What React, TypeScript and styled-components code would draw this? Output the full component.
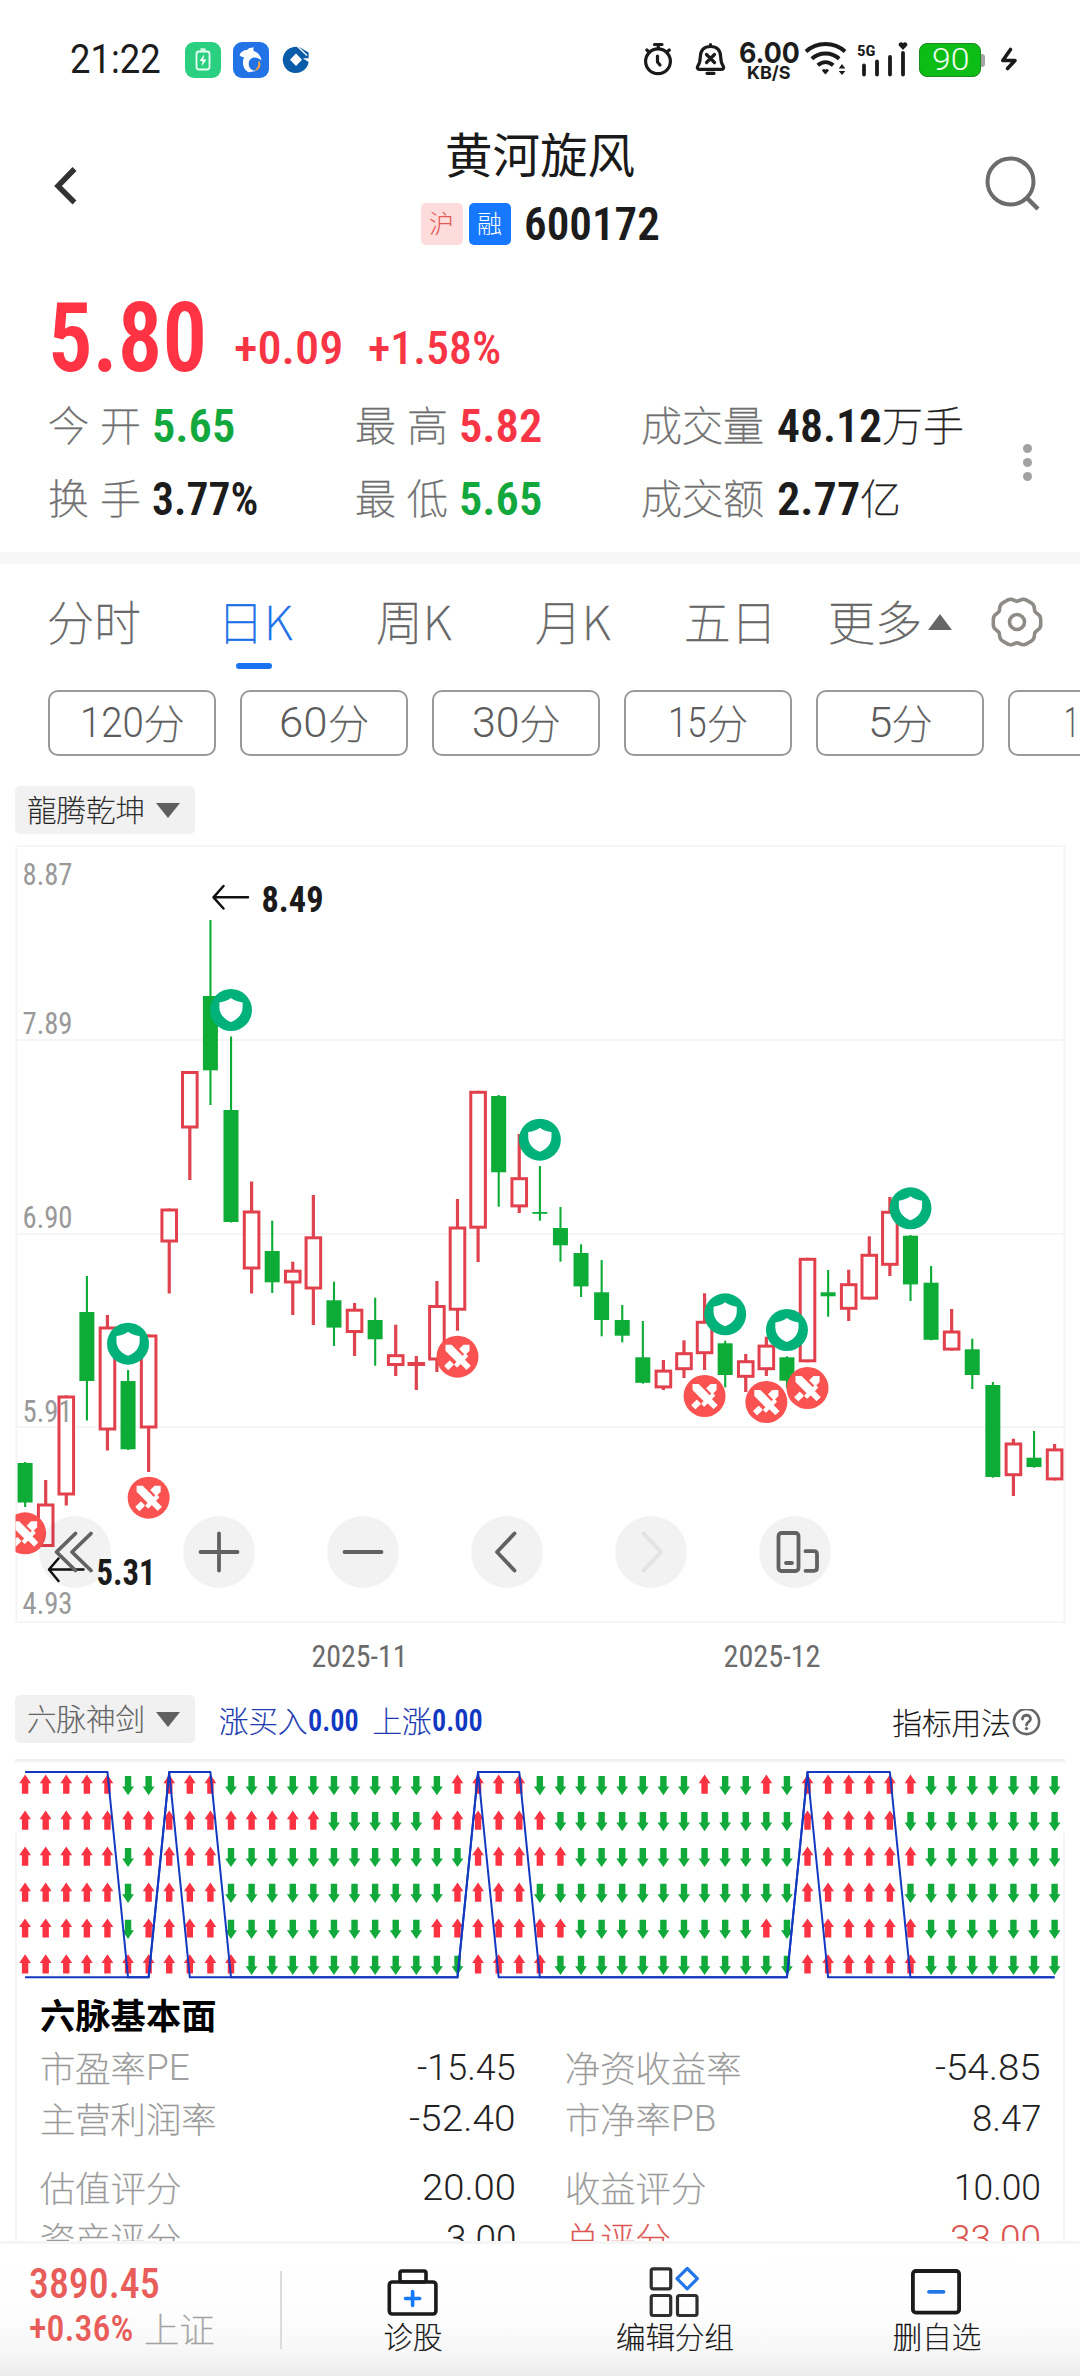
import React, { useLayoutEffect, useRef, useState } from "react";
import styled, { createGlobalStyle } from "styled-components";

const CJK = `"Noto Sans CJK SC", sans-serif`;
const DIN = `"Roboto Condensed", Roboto, sans-serif`;
const SANS = `Roboto, sans-serif`;
const RED = "#f73545";
const GREEN = "#12a83d";

const GlobalStyle = createGlobalStyle`
  * { box-sizing: border-box; }
  body { margin: 0; background: #fff; }
`;

/* ---------- text primitives ---------- */

const FitBox = styled.span<{ $w: number }>`
  display: block;
  flex: none;
  width: ${(p) => p.$w}px;
`;
const FitInner = styled.span<{ $size: number; $weight: number; $color: string; $font: string }>`
  display: inline-block;
  white-space: pre;
  transform-origin: 0 50%;
  font-family: ${(p) => p.$font};
  font-size: ${(p) => p.$size}px;
  font-weight: ${(p) => p.$weight};
  line-height: 1.1;
  vertical-align: top;
  color: ${(p) => p.$color};
`;

type NumProps = { w: number; size: number; weight?: number; color?: string; font?: string; children: string };

/** Figures condensed horizontally to the width of their slot. */
function Num({ w, size, weight = 500, color = "#1c1c1c", font = DIN, children }: NumProps) {
  const ref = useRef<HTMLSpanElement>(null);
  const [scale, setScale] = useState(1);
  useLayoutEffect(() => {
    if (ref.current) setScale(w / ref.current.offsetWidth);
  }, [w, children]);
  return (
    <FitBox $w={w}>
      <FitInner ref={ref} $size={size} $weight={weight} $color={color} $font={font} style={{ transform: `scaleX(${scale})` }}>
        {children}
      </FitInner>
    </FitBox>
  );
}

const Han = styled.span<{ $size: number; $color?: string; $weight?: number; $stroke?: number; $gap?: number }>`
  display: block;
  flex: none;
  white-space: pre;
  font-family: ${CJK};
  font-size: ${(p) => p.$size}px;
  line-height: 1.1;
  padding-bottom: 0.09em;
  font-weight: ${(p) => p.$weight ?? 100};
  color: ${(p) => p.$color ?? "#666"};
  letter-spacing: ${(p) => p.$gap ?? 0}px;
  -webkit-text-stroke: ${(p) => p.$stroke ?? 0.6}px ${(p) => p.$color ?? "#666"};
`;

/* ---------- page ---------- */

const Page = styled.main`
  width: 1080px;
  height: 2376px;
  overflow: hidden;
  background: #fff;
  display: flex;
  flex-direction: column;
`;

const StatusBar = styled.div`
  height: 120px;
  flex: none;
  display: flex;
  align-items: center;
  justify-content: space-between;
  padding: 0 59px 0 70px;
`;
const StatusGroup = styled.div`
  display: flex;
  align-items: center;
`;
const AppIcons = styled.div`
  display: flex;
  gap: 12px;
  margin-left: 24px;
  align-items: center;
`;
const Speed = styled.div`
  display: flex;
  flex-direction: column;
  align-items: center;
  width: 62px;
  margin-left: 7px;
  margin-right: 2px;
  & > * + * { margin-top: -6px; }
`;
const Battery = styled.div`
  width: 62px;
  height: 34px;
  margin-left: 9px;
  border-radius: 8px;
  background: #0bbd14;
  border: 1px solid #19891d;
  display: flex;
  align-items: center;
  justify-content: center;
`;
const BatteryTip = styled.div`
  width: 4px;
  height: 13px;
  background: #a5a5a5;
  border-radius: 0 3px 3px 0;
`;

const Header = styled.header`
  height: 150px;
  flex: none;
  display: grid;
  grid-template-columns: 120px 1fr 120px;
`;
const BackIcon = styled.svg`
  margin: 46px 0 0 50px;
`;
const SearchIcon = styled.svg`
  margin: 34px 0 0 21px;
`;
const TitleBlock = styled.div`
  display: flex;
  flex-direction: column;
  align-items: center;
`;
const TitleLine = styled.div`
  height: 70px;
  display: flex;
  align-items: center;
`;
const CodeLine = styled.div`
  height: 42px;
  margin-top: 13px;
  display: flex;
  align-items: center;
`;
const Badge = styled.div<{ $bg: string }>`
  width: 42px;
  height: 42px;
  border-radius: 5px;
  margin-right: 6px;
  background: ${(p) => p.$bg};
  display: flex;
  align-items: center;
  justify-content: center;
`;
const CodeText = styled.div`
  margin-left: 7px;
`;

const Quote = styled.section`
  height: 282px;
  flex: none;
  padding: 28px 0 0 48px;
`;
const PriceLine = styled.div`
  display: flex;
  height: 80px;
  align-items: center;
`;
const Change = styled.div`
  display: flex;
  gap: 25px;
  margin: 20px 0 0 27px;
`;
const QuoteBody = styled.div`
  display: flex;
  align-items: center;
  margin-top: 11px;
`;
const Stats = styled.div`
  display: grid;
  grid-template-columns: 307px 286px 382px;
  grid-auto-rows: 73px;
`;
const Stat = styled.div`
  display: flex;
  align-items: center;
`;
const StatValue = styled.div<{ $x: number }>`
  margin-left: ${(p) => p.$x}px;
  display: flex;
  align-items: center;
`;
const MoreDots = styled.div`
  display: flex;
  flex-direction: column;
  gap: 5px;
  & > i { width: 9px; height: 9px; border-radius: 50%; background: #a2a2a2; }
`;
const Divider = styled.div`
  height: 12px;
  flex: none;
  background: #f7f7f7;
`;

const Tabs = styled.nav`
  height: 126px;
  flex: none;
  padding: 0 0 10px 47px;
  display: grid;
  grid-template-columns: 170px 159px 159px 149px 144px 163px 1fr;
  align-items: center;
`;
const Tab = styled.div<{ $active?: boolean }>`
  position: relative;
  display: flex;
  align-items: center;
  &::after {
    content: "";
    display: ${(p) => (p.$active ? "block" : "none")};
    position: absolute;
    left: 19px;
    bottom: -19px;
    width: 36px;
    height: 6px;
    border-radius: 3px;
    background: #1a74f2;
  }
`;
const Triangle = styled.i<{ $up?: boolean }>`
  flex: none;
  margin-left: ${(p) => (p.$up ? 6 : 0)}px;
  border: solid transparent;
  border-width: ${(p) => (p.$up ? "0 12px 16px" : "15px 12.5px 0")};
  border-color: ${(p) => (p.$up ? "transparent transparent #666" : "#5f5f5f transparent transparent")};
`;

const MinuteRow = styled.div`
  height: 66px;
  flex: none;
  display: flex;
  gap: 24px;
  padding-left: 48px;
  overflow: hidden;
`;
const MinuteChip = styled.button`
  all: unset;
  box-sizing: border-box;
  flex: none;
  width: 168px;
  height: 66px;
  border: 2px solid #999;
  border-radius: 10px;
  display: flex;
  align-items: center;
  justify-content: center;
`;

const SelectChip = styled.div`
  flex: none;
  width: 180px;
  height: 48px;
  border-radius: 5px;
  background: #f1f1f1;
  display: flex;
  align-items: center;
  justify-content: space-between;
  padding: 0 15px 0 12px;
`;
const MainSelect = styled.div`
  margin: 30px 0 0 15px;
  flex: none;
`;

const ChartArea = styled.section`
  position: relative;
  height: 850px;
  margin-top: 6px;
  flex: none;
`;
const ChartSvg = styled.svg`
  display: block;
`;
const Controls = styled.div`
  position: absolute;
  left: 39px;
  top: 676px;
  display: flex;
  gap: 72px;
`;
const RoundButton = styled.div<{ $off?: boolean }>`
  width: 72px;
  height: 72px;
  border-radius: 50%;
  background: rgba(0, 0, 0, 0.052);
  color: ${(p) => (p.$off ? "#e3e3e3" : "#626262")};
`;

const IndicatorBar = styled.div`
  height: 48px;
  margin: 5px 39px 0 15px;
  flex: none;
  display: flex;
  align-items: center;
`;
const Reading = styled.div<{ $x: number }>`
  display: flex;
  align-items: center;
  margin: 4px 0 0 ${(p) => p.$x}px;
`;
const Usage = styled.div`
  margin: 10px 0 0 auto;
  display: flex;
  align-items: center;
`;

const Fundamentals = styled.section`
  height: 246px;
  flex: none;
  margin: 0 15px;
  padding: 0 23px;
  border: solid #f5f5f5;
  border-width: 0 2px;
  overflow: hidden;
`;
const FundTitle = styled.div`
  height: 42px;
  margin-bottom: 6px;
  display: flex;
  align-items: center;
`;
const FundRow = styled.div<{ $gap?: boolean }>`
  height: 51px;
  margin-top: ${(p) => (p.$gap ? 18 : 0)}px;
  display: grid;
  grid-template-columns: 476px 476px;
  column-gap: 49px;
`;
const FundCell = styled.div`
  display: flex;
  align-items: center;
  justify-content: space-between;
`;
const LabelGroup = styled.div`
  display: flex;
  align-items: center;
`;

const BottomBar = styled.footer`
  height: 135px;
  flex: none;
  border-top: 3px solid #f5f5f5;
  background: linear-gradient(#fff 0%, #fdfdfd 55%, #f6f6f6 85%, #ececec 100%);
  display: grid;
  grid-template-columns: 280px 2px 262px 262px 262px;
`;
const IndexBlock = styled.div`
  padding: 18px 0 0 29px;
`;
const IndexLine = styled.div`
  height: 45px;
  display: flex;
  align-items: center;
`;
const IndexName = styled.div`
  margin-left: 11px;
`;
const BarDivider = styled.div`
  height: 78px;
  margin-top: 27px;
  background: #dcdcdc;
`;
const Action = styled.div`
  padding-top: 20px;
  display: flex;
  flex-direction: column;
  align-items: center;
`;
const ActionLabel = styled.div`
  height: 34px;
  display: flex;
  align-items: center;
`;

/* ---------- candle data: [up?, bodyTop, bodyBottom, high, low] ---------- */

type Candle = [0 | 1, number, number, number, number];
const candles: Candle[] = [
  [0, 1463, 1502.5, 1462, 1507], [1, 1503.5, 1547, 1480, 1547], [1, 1395.5, 1495.5, 1395.5, 1505.5],
  [0, 1312, 1381, 1276, 1420.5], [1, 1326.5, 1430.5, 1315, 1450.5], [0, 1381, 1449.3, 1370, 1450],
  [1, 1334.5, 1428.5, 1334.5, 1472], [1, 1208.5, 1242.5, 1208.5, 1293.5], [1, 1071, 1128.5, 1071, 1180],
  [0, 996, 1070.3, 920, 1105], [0, 1110, 1222, 1036.5, 1222.5], [1, 1210.5, 1269.5, 1181.5, 1293.5],
  [0, 1251, 1282.3, 1220.7, 1293], [1, 1269.7, 1283.5, 1261.7, 1315], [1, 1236.3, 1289.5, 1195, 1325],
  [0, 1300.3, 1327.6, 1281.7, 1346], [1, 1308.7, 1333, 1303, 1356], [0, 1320, 1339.3, 1297.7, 1365.7],
  [1, 1354.2, 1366, 1324.7, 1376], [1, 1362, 1366, 1356, 1390], [1, 1305, 1360.5, 1281, 1372],
  [1, 1226.5, 1310.7, 1199, 1330.7], [1, 1090.8, 1228.7, 1090.8, 1262], [0, 1096, 1172.3, 1095, 1206.7],
  [1, 1177.2, 1207.4, 1134, 1213], [0, 1212, 1213.8, 1166, 1220.7], [0, 1228, 1245.3, 1207, 1261.7],
  [0, 1253, 1286.4, 1244.3, 1297], [0, 1292.3, 1320, 1260, 1336.3], [0, 1320, 1335.7, 1305, 1342.3],
  [0, 1357.3, 1382.8, 1321, 1383.7], [1, 1369.6, 1388.4, 1360, 1390], [1, 1352.2, 1370.2, 1340.3, 1378],
  [1, 1320.8, 1354.2, 1293.3, 1370], [0, 1343.3, 1375, 1340.7, 1387.3], [1, 1360.2, 1377.8, 1354, 1392],
  [1, 1344.6, 1370.2, 1336.7, 1376], [0, 1357.3, 1380.7, 1356.3, 1388], [1, 1257.8, 1362.3, 1257.8, 1362.3],
  [0, 1292.3, 1296.3, 1270, 1316.7], [1, 1283.2, 1309.8, 1269.7, 1321], [1, 1253.8, 1299.6, 1236.3, 1299.6],
  [1, 1210.8, 1265.8, 1197, 1276], [0, 1235.7, 1284.4, 1235, 1301], [0, 1282.7, 1339.8, 1266, 1340.3],
  [1, 1330.5, 1350.6, 1309, 1350.6], [0, 1349.3, 1375, 1338.7, 1389], [0, 1385, 1477, 1382, 1477.7],
  [1, 1442.5, 1476.2, 1438.7, 1496], [0, 1457.7, 1467, 1431, 1467.7], [1, 1448.4, 1480.4, 1444, 1480.4],
];
const cx = (i: number) => 25.1 + 20.59 * i;

function CandleMark({ c, i }: { c: Candle; i: number }) {
  const [up, top, bottom, high, low] = c;
  const x = cx(i);
  if (!up)
    return (
      <g fill="#0cac37">
        <rect x={x - 1} y={high} width={2.1} height={low - high} />
        <rect x={x - 7.5} y={top} width={15} height={bottom - top} />
      </g>
    );
  return (
    <g>
      <rect x={x - 1.6} y={high} width={3.2} height={low - high} fill="#de4450" />
      <rect x={x - 7.3} y={top + 1.5} width={14.6} height={Math.max(1, bottom - top - 3)} fill={bottom - top < 5 ? RED : "#fff"} stroke="#e2404d" strokeWidth={3} />
    </g>
  );
}

const shields: [number, number][] = [[5, 1343.7], [10, 1010], [25, 1139.7], [34, 1314.3], [37, 1330], [43, 1208.3]];
const swords: [number, number][] = [[0, 1533.3], [6, 1497.7], [21, 1356.7], [33, 1396], [36, 1402], [38, 1388]];

const Shield = ({ x, y }: { x: number; y: number }) => (
  <g transform={`translate(${x} ${y})`}>
    <circle r={21} fill="#00b27a" />
    <path d="M0 -12C2.5 -10 7 -8 11.6 -7.6V-2.5C11.6 4.5 6.5 9.5 0 12C-6.5 9.5 -11.6 4.5 -11.6 -2.5V-7.6C-7 -8 -2.5 -10 0 -12Z" fill="#fff" />
  </g>
);
const Swords = ({ x, y }: { x: number; y: number }) => (
  <g transform={`translate(${x} ${y})`}>
    <circle r={21} fill="#fa5250" />
    <g fill="#fff">
      <g transform="rotate(135)">
        <path d="M-17 0L-12.7 -4.3H-6.5V4.3H-12.7Z" />
        <rect x={8} y={-3} width={8} height={6} rx={0.6} />
      </g>
      <g transform="rotate(45)">
        <path d="M-17 0L-12.7 -4.3H3.5V4.3H-12.7Z" />
        <rect x={3} y={-8} width={4.4} height={16} rx={1} />
        <rect x={6} y={-3} width={9.8} height={6} rx={0.6} />
      </g>
    </g>
  </g>
);

const axis: [string, number][] = [["8.87", 874], ["7.89", 1023], ["6.90", 1217], ["5.91", 1411], ["4.93", 1603]];

const SvgNum = styled.text<{ $size: number; $weight: number }>`
  font-family: ${DIN};
  font-size: ${(p) => p.$size}px;
  font-weight: ${(p) => p.$weight};
`;

function MainChart() {
  return (
    <ChartSvg width={1080} height={850} viewBox="0 840 1080 850">
      <defs>
        <clipPath id="plot"><rect x={15.5} y={840} width={1050} height={790} /></clipPath>
      </defs>
      <g stroke="#f5f5f5" strokeWidth={2} fill="none">
        <rect x={16.5} y={846} width={1048} height={776} />
        {[1040, 1234, 1427].map((y) => <line key={y} x1={16} x2={1064} y1={y} y2={y} />)}
      </g>
      <g clipPath="url(#plot)">
        {candles.map((c, i) => <CandleMark key={i} c={c} i={i} />)}
        {axis.map(([t, y]) => (
          <SvgNum key={t} x={22.5} y={y + 10.8} $size={31} $weight={450} fill="#999" textLength={50} lengthAdjust="spacingAndGlyphs">{t}</SvgNum>
        ))}
        {shields.map(([i, y]) => <Shield key={i} x={cx(i)} y={y} />)}
        {swords.map(([i, y]) => <Swords key={i} x={cx(i)} y={y} />)}
      </g>
      <g stroke="#111" strokeWidth={2.5} fill="none" strokeLinecap="round" strokeLinejoin="round">
        <path d="M248 897.3H213.5M223.5 886L213.5 897.3L223.5 908.5" />
        <path d="M83.5 1569.5H49M58.5 1558.5L49 1569.5L58.5 1581" />
      </g>
      <SvgNum x={261.5} y={911.5} $size={37.5} $weight={700} fill="#1b1b1b" textLength={62} lengthAdjust="spacingAndGlyphs">8.49</SvgNum>
      <SvgNum x={96.5} y={1584.8} $size={37.5} $weight={700} fill="#1b1b1b" textLength={59} lengthAdjust="spacingAndGlyphs">5.31</SvgNum>
      <SvgNum x={311.5} y={1667} $size={31} $weight={450} fill="#6b6b6b" textLength={96} lengthAdjust="spacingAndGlyphs">2025-11</SvgNum>
      <SvgNum x={723.5} y={1667} $size={31} $weight={450} fill="#6b6b6b" textLength={97} lengthAdjust="spacingAndGlyphs">2025-12</SvgNum>
    </ChartSvg>
  );
}

const glyphs: { d: string; off?: boolean }[] = [
  { d: "M36.5 17.5L17.5 36L36.5 54.5M52 17.5L33 36L52 54.5" },
  { d: "M17.5 36H54.5M36 17.5V54.5" },
  { d: "M17.5 36H54.5" },
  { d: "M43.5 17.5L26 36L43.5 54.5" },
  { d: "M28.5 17.5L46 36L28.5 54.5", off: true },
];

/* ---------- six-row signal grid ---------- */

const signalRows = [
  "UUUUUDDUUUDDDDDDDDDDDUUUUDDDDDDDDUDDUDUUUUUUDDDDDDD",
  "UUUUUUUUUUUUUUUDDDDDUUUUUUDDDDDDDDDDDDUUUUUDDDDDDDD",
  "UUUUUDUUUUDDDDDDDDDDDDUUUUUDDDDDDDDDDDUUUUUUDDDDDDD",
  "UUUUUDUUUUDDDDDDDDDDDUUUUDDDDDDDDDDDDDUUUUUDDDDDDDD",
  "UUUUUDUUUUDDDDDDDDDDUUUUUUUDDDDDDDDDUDUUUUUUDDDDDDD",
  "UUUUUUUUUUUDDDDDDDDDDDUUUUDDDDDDDDDDDDUUUUUUDDDDDDD",
];
const HI = 1772;
const LO = 1977.3;
const line = (isHigh: (i: number) => boolean) =>
  Array.from({ length: 51 }, (_, i) => `${cx(i)},${isHigh(i) ? HI : LO}`).join(" ");
const risingLine = line((i) => i <= 4 || (i >= 7 && i <= 9) || (i >= 22 && i <= 24) || (i >= 38 && i <= 42));
const buyLine = line((i) => i === 7 || i === 22 || i === 38);
const buyStart = buyLine.split(" ").slice(5).join(" ");

function SignalChart() {
  return (
    <ChartSvg width={1080} height={252} viewBox="0 1743 1080 252">
      <rect x={15} y={1759} width={1050} height={3} fill="#f1f1f1" />
      <path d="M16 1833V1995M1064 1833V1995" stroke="#f5f5f5" strokeWidth={2} />
      {signalRows.map((row, r) =>
        [...row].map((s, i) => {
          const y = 1784.3 + r * 35.95;
          return s === "U" ? (
            <path key={`${r}-${i}`} fill="#fa3242" transform={`translate(${cx(i)} ${y})`} d="M0 -9.7L5.9 -1H3.2V9.5H-3.2V-1H-5.9Z" />
          ) : (
            <path key={`${r}-${i}`} fill="#10a93a" transform={`translate(${cx(i)} ${y + 1.2})`} d="M0 9.7L5.9 1H3.2V-9.5H-3.2V1H-5.9Z" />
          );
        })
      )}
      <g fill="none" stroke="#1239c0" strokeWidth={2} strokeLinejoin="round">
        <path d={`M${cx(0)} ${LO}H${cx(5)}`} />
        <polyline points={buyStart} />
        <polyline points={risingLine} />
      </g>
    </ChartSvg>
  );
}

/* ---------- gear outline: broad teeth with six narrow notches ---------- */
const gearPath =
  "M" +
  Array.from({ length: 120 }, (_, k) => {
    const t = (k * 3 * Math.PI) / 180;
    const notch = Math.pow((1 - Math.cos(6 * t)) / 2, 2.2);
    const flat = 0.7 * Math.cos(6 * t);
    const r = 24.4 - flat - 4.2 * notch;
    return `${(26 + r * Math.cos(t)).toFixed(2)} ${(26 + r * Math.sin(t)).toFixed(2)}`;
  }).join("L") +
  "Z";

const stats: { label: string; gap: number; x: number; value: string; w: number; color?: string; unit?: string }[] = [
  { label: "今开", gap: 11, x: 0, value: "5.65", w: 83, color: GREEN },
  { label: "最高", gap: 11, x: 0, value: "5.82", w: 83, color: RED },
  { label: "成交量", gap: 0, x: 13, value: "48.12", w: 105, unit: "万手" },
  { label: "换手", gap: 11, x: 0, value: "3.77%", w: 106 },
  { label: "最低", gap: 11, x: 0, value: "5.65", w: 83, color: GREEN },
  { label: "成交额", gap: 0, x: 13, value: "2.77", w: 83, unit: "亿" },
];

const minutes: [string, number][] = [["120", 64], ["60", 49], ["30", 48], ["15", 39], ["5", 24], ["1", 15]];

type Fund = { label: string; latin?: string; lw?: number; value: string; w: number; color?: string };
const fundRows: [Fund, Fund][] = [
  [{ label: "市盈率", latin: "PE", lw: 44, value: "-15.45", w: 99 }, { label: "净资收益率", value: "-54.85", w: 106 }],
  [{ label: "主营利润率", value: "-52.40", w: 107 }, { label: "市净率", latin: "PB", lw: 45, value: "8.47", w: 69 }],
  [{ label: "估值评分", value: "20.00", w: 94 }, { label: "收益评分", value: "10.00", w: 87 }],
  [{ label: "资产评分", value: "3.00", w: 70 }, { label: "总评分", value: "33.00", w: 91, color: "#dc5450" }],
];

export default function App() {
  return (
    <Page>
      <GlobalStyle />
      <StatusBar>
        <StatusGroup>
          <Num w={91} size={40} weight={400} font={SANS}>21:22</Num>
          <AppIcons>
            <svg width="36" height="36" viewBox="0 0 36 36">
              <rect width="36" height="36" rx="9" fill="#2bcf80" />
              <rect x="11.5" y="9.5" width="13" height="18" rx="2.5" fill="none" stroke="#e9fff4" strokeWidth="1.8" />
              <path d="M15.5 7.5H20.5" stroke="#e9fff4" strokeWidth="2.2" />
              <path d="M19.2 12.5L14.5 19H17.6L16.8 24L21.5 17.5H18.4Z" fill="#fff" />
            </svg>
            <svg width="36" height="36" viewBox="0 0 36 36">
              <rect width="36" height="36" rx="9" fill="#2273e6" />
              <path d="M6.5 13C7.5 10 10.5 8 14 8C16 5.6 19 5.2 21 5.6C20.2 6.6 20.2 7.8 20.8 9C25 10.5 28 14 28.5 18.5C26 16.2 23 15 20.5 15.5C16.5 16.5 15 20 16 24C17 27.4 19.5 28.6 23 29L15.5 30.2C10.2 27.5 8.6 21.5 11 15.2C9.5 15.2 7.5 14.5 6.5 13Z" fill="#fff" />
              <path d="M26.5 19C29 23.5 26.5 28.5 20.5 29C24.3 27 26 23.5 25 19.800Z" fill="#f5a142" />
            </svg>
            <svg width="30" height="30" viewBox="1 1 30 30">
              <path fillRule="evenodd" d="M20 3.400A13 13.200 0 1 0 28.600 18L22.800 14.200H28.600V8.500ZM16 9.500L22 15.800L16 22L10 15.800Z" fill="#0a5ca8" />
              <path d="M17.500 2.500L27 11.500" stroke="#fff" strokeWidth="1.300" />
            </svg>
          </AppIcons>
        </StatusGroup>
        <StatusGroup>
          <svg width="90" height="40" viewBox="636 40 90 40" fill="none" stroke="#1a1a1a" strokeWidth="3.2" strokeLinecap="round" strokeLinejoin="round">
            <circle cx="653" cy="61.3" r="12.4" />
            <path d="M652.5 56V62L655 65M649.5 44.5H657M653.3 45V48M641.8 50L643.5 51.5M664.3 50L662.5 51.5" />
            <path d="M705.5 46.5C698.5 46.5 695.5 51 695.3 57C695.2 61.5 694.5 63.8 692.7 66.2C691.8 67.8 692.5 69.3 694.3 69.3H716.7C718.5 69.3 719.2 67.8 718.3 66.2C716.5 63.8 715.8 61.5 715.7 57C715.5 51 712.5 46.5 705.5 46.5ZM705.5 44.5V46M702 73.3H709M701.5 54.5L709.5 62.5M709.5 54.5L701.5 62.5" />
          </svg>
          <Speed>
            <Num w={61} size={29} weight={700} font="Inter, sans-serif">6.00</Num>
            <Num w={44} size={18} weight={700} font="Inter, sans-serif">KB/S</Num>
          </Speed>
          <svg width="108" height="44" viewBox="800 38 108 44" fill="none" stroke="#1a1a1a" strokeLinecap="round">
            <path d="M804 51.5C815 41.5 832 41.5 843 51.5M809.8 58.8C817.5 51.8 829.5 51.8 837.2 58.8M815.8 65.3C820.5 61.2 826.5 61.2 831.2 65.3" strokeWidth="4" strokeLinecap="butt" />
            <path d="M823.4 74.5L820 70.8A1.9 1.9 0 0 1 823.4 69.8A1.9 1.9 0 0 1 826.8 70.8ZM836.7 68.5L840 64L843.3 68.5ZM836.7 71L840 75L843.3 71Z" fill="#1a1a1a" stroke="none" />
            <path d="M862 65.5V74.5M875 61.5V74.5M888 57V74.5M901 53V74.5" strokeWidth="3.8" />
            <path d="M901 50L896.6 45.3A2.5 2.5 0 0 1 901 43.3A2.5 2.5 0 0 1 905.4 45.3Z" fill="#1a1a1a" stroke="none" />
            <SvgNum x="855" y="56" $size={15.5} $weight={700} fill="#1a1a1a" stroke="none" textLength={18.5} lengthAdjust="spacingAndGlyphs">5G</SvgNum>
          </svg>
          <Battery><Num w={37} size={31} weight={300} color="#f0fff1" font={SANS}>90</Num></Battery>
          <BatteryTip />
          <svg width="36" height="34" viewBox="984 43 36 34">
            <path d="M1009.5 49.5L1001.8 60.5H1014L1006.5 68.5" fill="none" stroke="#1a1a1a" strokeWidth="3.6" strokeLinecap="round" strokeLinejoin="round" />
          </svg>
        </StatusGroup>
      </StatusBar>

      <Header>
        <BackIcon width="32" height="40" viewBox="50 166 32 40">
          <path d="M74.5 169L58 186L74.5 202.5" fill="none" stroke="#333" strokeWidth="5.5" />
        </BackIcon>
        <TitleBlock>
          <TitleLine><Han $size={47.5} $color="#1a1a1a" $weight={400} $stroke={0}>黄河旋风</Han></TitleLine>
          <CodeLine>
            <Badge $bg="#ffdcdc"><Han $size={25} $color="#e05a56" $weight={300} $stroke={0}>沪</Han></Badge>
            <Badge $bg="#1677ff"><Han $size={25} $color="#fff" $weight={300} $stroke={0}>融</Han></Badge>
            <CodeText><Num w={136} size={47} weight={600}>600172</Num></CodeText>
          </CodeLine>
        </TitleBlock>
        <SearchIcon width="60" height="60" viewBox="980 154 60 60" fill="none" stroke="#6c6c6c" strokeWidth="4">
          <circle cx="1009.5" cy="181.5" r="23" />
          <path d="M1025.5 197.5L1037 209" strokeWidth="4.5" />
        </SearchIcon>
      </Header>

      <Quote>
        <PriceLine>
          <Num w={159} size={97} weight={600} color="#ff3344">5.80</Num>
          <Change>
            <Num w={109} size={47} weight={500} color={RED}>+0.09</Num>
            <Num w={133} size={47} weight={500} color={RED}>+1.58%</Num>
          </Change>
        </PriceLine>
        <QuoteBody>
          <Stats>
            {stats.map((s) => (
              <Stat key={s.label}>
                <Han $size={41} $color="#6f6f6f" $gap={s.gap}>{s.label}</Han>
                <StatValue $x={s.x}>
                  <Num w={s.w} size={47} weight={600} color={s.color}>{s.value}</Num>
                  {s.unit && <Han $size={41} $color="#1c1c1c">{s.unit}</Han>}
                </StatValue>
              </Stat>
            ))}
          </Stats>
          <MoreDots><i /><i /><i /></MoreDots>
        </QuoteBody>
      </Quote>
      <Divider />

      <Tabs>
        <Tab><Han $size={47}>分时</Han></Tab>
        <Tab $active><Han $size={47} $color="#1a6fe8">日K</Han></Tab>
        <Tab><Han $size={47}>周K</Han></Tab>
        <Tab><Han $size={47}>月K</Han></Tab>
        <Tab><Han $size={46.5}>五日</Han></Tab>
        <Tab><Han $size={47}>更多</Han><Triangle $up /></Tab>
        <svg width="52" height="52" viewBox="0 0 52 52" overflow="visible" fill="none" stroke="#8e8b87" strokeWidth="3.6" strokeLinejoin="round">
          <path d={gearPath} />
          <circle cx="26" cy="26" r="7.5" />
        </svg>
      </Tabs>

      <MinuteRow>
        {minutes.map(([n, w]) => (
          <MinuteChip key={n}>
            <Num w={w} size={42} weight={300} color="#5c5c5c" font={SANS}>{n}</Num>
            <Han $size={41} $color="#5c5c5c">分</Han>
          </MinuteChip>
        ))}
      </MinuteRow>

      <MainSelect>
        <SelectChip><Han $size={29.5} $color="#1c1c1c" $stroke={0.4}>龍腾乾坤</Han><Triangle /></SelectChip>
      </MainSelect>

      <ChartArea>
        <MainChart />
        <Controls>
          {glyphs.map((g) => (
            <RoundButton key={g.d} $off={g.off}>
              <svg width="72" height="72" viewBox="0 0 72 72" fill="none" stroke="currentColor" strokeWidth="3.8" strokeLinecap="round" strokeLinejoin="round"><path d={g.d} /></svg>
            </RoundButton>
          ))}
          <RoundButton>
            <svg width="72" height="72" viewBox="0 0 72 72" fill="none" stroke="currentColor" strokeWidth="3.8" strokeLinecap="round" strokeLinejoin="round">
              <rect x="19.5" y="17" width="20" height="38" rx="3" />
              <path d="M27 47H33M46.5 35.2H55Q58 35.2 58 38.2V51.8Q58 54.8 55 54.8H46.5" />
            </svg>
          </RoundButton>
        </Controls>
      </ChartArea>

      <IndicatorBar>
        <SelectChip><Han $size={29.5} $color="#5f5f5f" $stroke={0.5}>六脉神剑</Han><Triangle /></SelectChip>
        <Reading $x={24}>
          <Han $size={29.5} $color="#1434b0" $stroke={0.5}>涨买入</Han>
          <Num w={51} size={31} weight={600} color="#1238c2">0.00</Num>
        </Reading>
        <Reading $x={14}>
          <Han $size={29.5} $color="#1434b0" $stroke={0.5}>上涨</Han>
          <Num w={51} size={31} weight={600} color="#1238c2">0.00</Num>
        </Reading>
        <Usage>
          <Han $size={29.7} $color="#111" $stroke={0.5}>指标用法</Han>
          <svg width="30" height="30" viewBox="0 0 30 30" fill="none" stroke="#666" strokeLinecap="round">
            <circle cx="15.5" cy="12.5" r="12.6" strokeWidth="2.6" />
            <path d="M11.5 10C11.5 5 19.5 5 19.500 10C19.500 12.800 15.500 12.800 15.500 16" strokeWidth="2.800" />
            <circle cx="15.500" cy="19.600" r="1.700" fill="#666" stroke="none" />
          </svg>
        </Usage>
      </IndicatorBar>
      <SignalChart />

      <Fundamentals>
        <FundTitle><Han $size={35.3} $color="#000" $weight={700} $stroke={0}>六脉基本面</Han></FundTitle>
        {fundRows.map((row, r) => (
          <FundRow key={r} $gap={r === 2}>
            {row.map((f) => (
              <FundCell key={f.label}>
                <LabelGroup>
                  <Han $size={35.3} $color={f.color ?? "#999"}>{f.label}</Han>
                  {f.latin && <Num w={f.lw ?? 45} size={37} weight={300} color="#a0a0a0" font={SANS}>{f.latin}</Num>}
                </LabelGroup>
                <Num w={f.w} size={37} weight={300} color={f.color ?? "#222"} font={SANS}>{f.value}</Num>
              </FundCell>
            ))}
          </FundRow>
        ))}
      </Fundamentals>

      <BottomBar>
        <IndexBlock>
          <IndexLine><Num w={131} size={42} weight={500} color="#e85c59">3890.45</Num></IndexLine>
          <IndexLine>
            <Num w={104} size={37} weight={500} color="#e85c59">+0.36%</Num>
            <IndexName><Han $size={35.3} $color="#a3a3a3">上证</Han></IndexName>
          </IndexLine>
        </IndexBlock>
        <BarDivider />
        <Action>
          <svg width="60" height="56" viewBox="382 2265 60 56" fill="none" stroke="#1a1a1a" strokeWidth="3.6" strokeLinecap="round">
            <rect x="399" y="2272" width="26" height="11" rx="2" />
            <rect x="388.3" y="2283" width="46.6" height="32" rx="3" />
            <path d="M411.6 2292.5V2306.5M404.5 2299.5H418.7" stroke="#1677ff" />
          </svg>
          <ActionLabel><Han $size={29.5} $color="#111" $stroke={0.5}>诊股</Han></ActionLabel>
        </Action>
        <Action>
          <svg width="60" height="56" viewBox="645 2265 60 56" fill="none" stroke="#2e2e2e" strokeWidth="3.2">
            <rect x="651.2" y="2269.8" width="19.5" height="20" rx="2" />
            <rect x="651.2" y="2296.5" width="19.5" height="20" rx="2" />
            <rect x="677.5" y="2296.5" width="19.5" height="20" rx="2" />
            <path d="M687.2 2269.5L697.4 2279.6L687.2 2289.8L677 2279.6Z" stroke="#2276e8" strokeLinejoin="round" />
          </svg>
          <ActionLabel><Han $size={29.5} $color="#111" $stroke={0.5}>编辑分组</Han></ActionLabel>
        </Action>
        <Action>
          <svg width="60" height="56" viewBox="906 2265 60 56" fill="none" stroke="#1a1a1a" strokeWidth="3.8" strokeLinecap="round">
            <rect x="911.9" y="2272" width="46.2" height="41.6" rx="3" />
            <path d="M928 2292.8H942.5" stroke="#2276e8" />
          </svg>
          <ActionLabel><Han $size={29.5} $color="#111" $stroke={0.5}>删自选</Han></ActionLabel>
        </Action>
      </BottomBar>
    </Page>
  );
}
